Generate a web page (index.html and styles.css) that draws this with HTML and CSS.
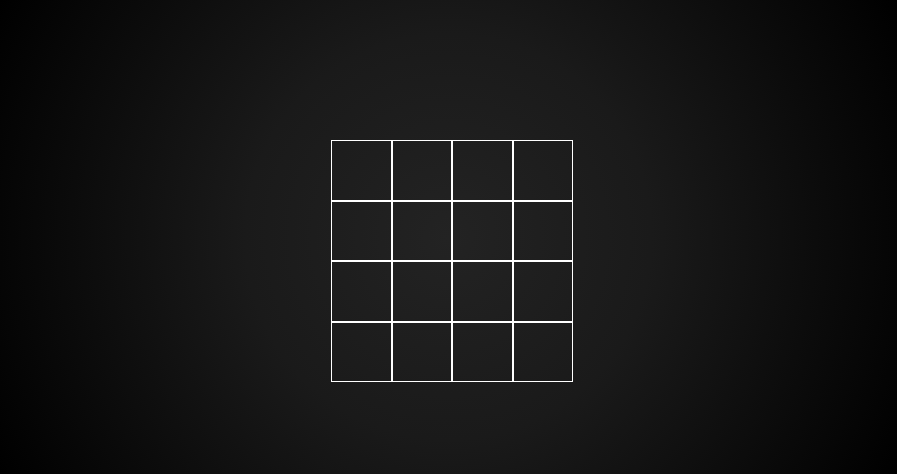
FILE: index.html
```html
<!DOCTYPE html>
<html lang="en">
<head>
<meta charset="utf-8">
<title>Grid</title>
<link rel="stylesheet" href="styles.css">
</head>
<body>
<main class="stage">
  <div class="board">
    <div class="cell"></div><div class="cell"></div><div class="cell"></div><div class="cell"></div>
    <div class="cell"></div><div class="cell"></div><div class="cell"></div><div class="cell"></div>
    <div class="cell"></div><div class="cell"></div><div class="cell"></div><div class="cell"></div>
    <div class="cell"></div><div class="cell"></div><div class="cell"></div><div class="cell"></div>
  </div>
</main>
</body>
</html>
```
FILE: styles.css
```css
html, body {
  margin: 0;
  height: 100%;
}
body {
  background: radial-gradient(circle at center, #232323 0%, #1a1a1a 40%, #000 100%);
  font-family: "Liberation Sans", sans-serif;
  overflow: hidden;
}
.stage {
  height: 100%;
  box-sizing: border-box;
  display: flex;
  justify-content: center;
  align-items: flex-start;
  padding: 140px 0 0 7px;
}
.board {
  display: grid;
  grid-template-columns: repeat(4, 60.5px);
  grid-template-rows: repeat(4, 60.5px);
}
.cell {
  box-sizing: border-box;
  border: 1px solid #fff;
}
```
